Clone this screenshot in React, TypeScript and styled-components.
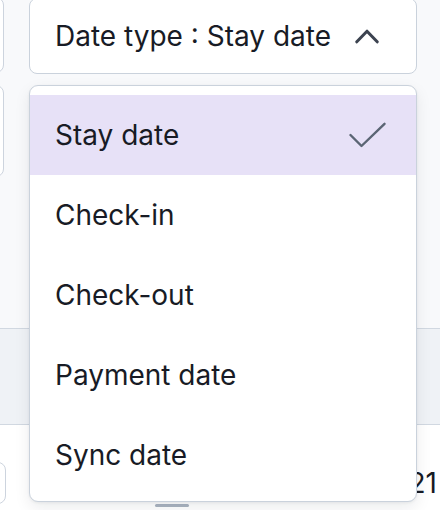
import styled, { createGlobalStyle } from 'styled-components';

const GlobalStyle = createGlobalStyle`
  html, body {
    margin: 0;
    padding: 0;
    background: #ffffff;
  }
  body {
    font-family: Inter, "Noto Sans", "Liberation Sans", sans-serif;
    -webkit-font-smoothing: antialiased;
  }
  * {
    box-sizing: border-box;
  }
`;

const Page = styled.div`
  position: relative;
  width: 440px;
  height: 510px;
  overflow: hidden;
  display: flex;
  flex-direction: column;
  background: #ffffff;
`;

const FilterArea = styled.div`
  height: 328px;
  flex-shrink: 0;
  background: #f8f9fb;
  display: flex;
  gap: 25px;
`;

const LeftColumn = styled.div`
  width: 100px;
  margin-left: -96px;
  display: flex;
  flex-direction: column;
  gap: 12px;
`;

const GhostBox = styled.div<{ $h: number; $top?: number }>`
  height: ${(p) => p.$h}px;
  margin-top: ${(p) => p.$top ?? 0}px;
  background: #ffffff;
  border: 1px solid #cdd4de;
  border-radius: 8px;
`;

const Trigger = styled.button`
  width: 388px;
  height: 76px;
  margin-top: -2px;
  padding: 0 37px 0 25px;
  display: flex;
  align-items: center;
  justify-content: space-between;
  background: #ffffff;
  border: 1px solid #cad2dc;
  border-radius: 8px;
  font-family: inherit;
  font-size: 28px;
  color: #181b25;
  cursor: pointer;
`;

const HeaderBand = styled.div`
  height: 97px;
  flex-shrink: 0;
  background: #eff2f6;
  border-top: 1px solid #d1d8e1;
  border-bottom: 1px solid #d1d8e1;
`;

const TableRow = styled.div`
  display: flex;
  align-items: flex-start;
  padding-top: 37px;
`;

const RowCell = styled.div`
  width: 100px;
  height: 42px;
  margin-left: -94px;
  background: #ffffff;
  border: 1px solid #cdd4de;
  border-radius: 8px;
`;

const HandleBar = styled.div`
  width: 34px;
  height: 3px;
  margin-left: 149px;
  margin-top: 42px;
  background: #aab3c0;
  border-radius: 2px;
`;

const YearText = styled.span`
  margin-left: auto;
  margin-right: 3px;
  margin-top: 4px;
  font-size: 28px;
  color: #181b25;
`;

const Menu = styled.ul`
  position: absolute;
  top: 85px;
  left: 29px;
  width: 388px;
  height: 417px;
  margin: 0;
  padding: 9px 0 8px;
  list-style: none;
  background: #ffffff;
  border: 1px solid #cad2dc;
  border-radius: 9px;
  box-shadow: 0 6px 16px rgba(15, 23, 42, 0.08), 0 1px 3px rgba(15, 23, 42, 0.06);
  overflow: hidden;
`;

const Option = styled.li<{ $selected?: boolean }>`
  height: 80px;
  padding: 0 30px 0 25px;
  display: flex;
  align-items: center;
  justify-content: space-between;
  font-size: 28px;
  color: #181b25;
  background: ${(p) => (p.$selected ? '#e7e1f7' : 'transparent')};
`;

const ChevronUp = () => (
  <svg width="24" height="15" viewBox="0 0 24 15" fill="none">
    <polyline
      points="1.8,12.8 12,2.2 22.2,12.8"
      stroke="#3c4350"
      strokeWidth="3"
      strokeLinecap="round"
      strokeLinejoin="round"
    />
  </svg>
);

const Check = () => (
  <svg width="37" height="27" viewBox="0 0 37 27" fill="none">
    <polyline
      points="1.5,13 12.5,24 35.5,1.8"
      stroke="#5b6574"
      strokeWidth="2.4"
      strokeLinecap="round"
      strokeLinejoin="round"
    />
  </svg>
);

const options = ['Stay date', 'Check-in', 'Check-out', 'Payment date', 'Sync date'];

export default function App() {
  const selected = 'Stay date';

  return (
    <>
      <GlobalStyle />
      <Page>
        <FilterArea>
          <LeftColumn>
            <GhostBox $h={76} $top={-3} />
            <GhostBox $h={92} />
          </LeftColumn>
          <Trigger>
            <span>Date type : {selected}</span>
            <ChevronUp />
          </Trigger>
        </FilterArea>
        <HeaderBand />
        <TableRow>
          <RowCell />
          <HandleBar />
          <YearText>2021</YearText>
        </TableRow>

        <Menu>
          {options.map((o) => (
            <Option key={o} $selected={o === selected}>
              <span>{o}</span>
              {o === selected && <Check />}
            </Option>
          ))}
        </Menu>
      </Page>
    </>
  );
}
